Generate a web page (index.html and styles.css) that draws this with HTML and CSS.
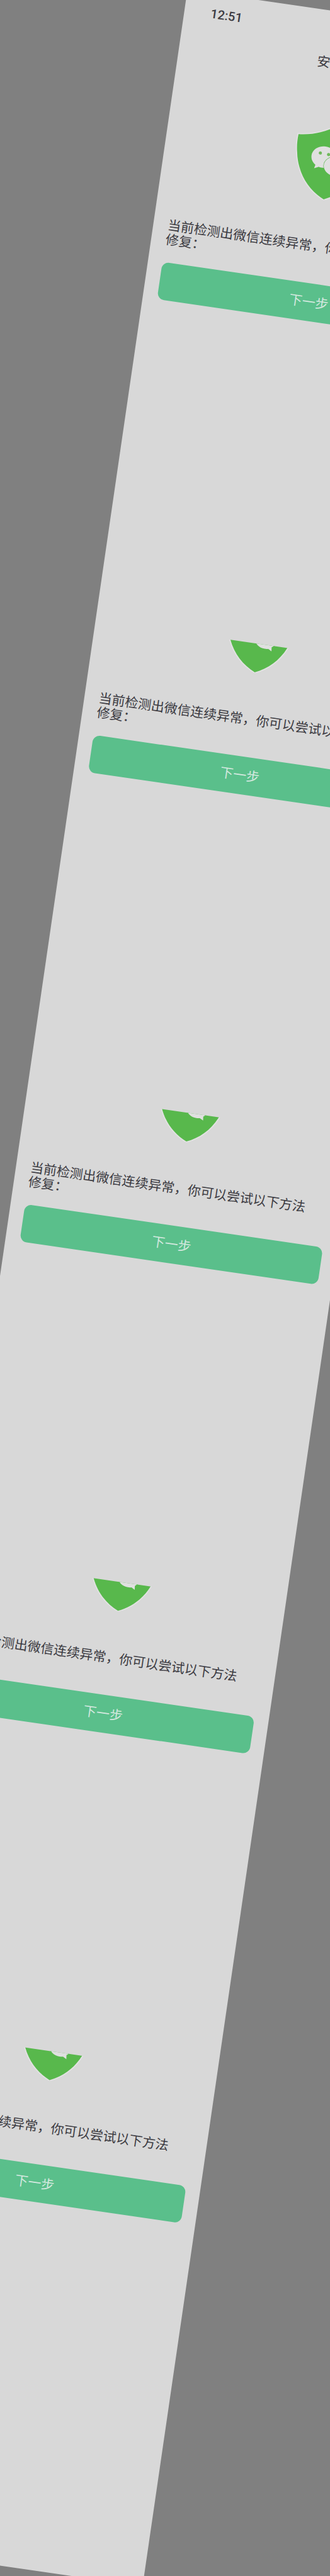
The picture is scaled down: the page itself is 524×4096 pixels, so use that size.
FILE: index.html
```html
<!DOCTYPE html>
<html lang="zh-CN">
<head>
<meta charset="utf-8">
<meta name="viewport" content="width=device-width, initial-scale=1">
<title>安全中心</title>
<link rel="stylesheet" href="styles.css">
</head>
<body>
<svg class="defs" aria-hidden="true">
  <symbol id="shield" viewBox="0 0 180 188">
    <path class="shield-body" d="M90 3C66 20 34 31 4 33C3 48 4 64 7 77C9 90 13 103 18 114C33 148 58 172 90 186C122 172 147 148 162 114C167 103 171 90 173 77C176 64 177 48 176 33C146 31 114 20 90 3Z"/>
    <path class="bubble" d="M76 54C58 54 44 66 44 81C44 90 49 98 57 103L55 112L66 107C69 108 73 108 76 108C94 108 108 96 108 81C108 66 94 54 76 54Z"/>
    <path class="bubble bubble-front" d="M106 76C91 76 78 87 78 100C78 113 91 124 106 124C109 124 112 124 115 123L124 128L123 118C129 114 134 108 134 100C134 87 121 76 106 76Z"/>
    <g class="eyes">
      <circle cx="65" cy="72" r="4"/><circle cx="86" cy="73" r="4"/>
      <circle cx="97" cy="93" r="3"/><circle cx="115" cy="93" r="3"/>
    </g>
  </symbol>
</svg>
<div class="stage">
  <main class="page">
    <header class="top">
      <time class="clock">12:51</time>
      <h1 class="title">安全中心</h1>
    </header>
    <section class="panel">
      <svg class="icon" viewBox="0 0 180 188" aria-hidden="true"><use href="#shield" width="180" height="188"/></svg>
      <p class="message">当前检测出微信连续异常，你可以尝试以下方法修复：</p>
      <button class="next" type="button">下一步</button>
    </section>
    <section class="panel">
      <svg class="icon icon-cut" viewBox="0 114 180 74" aria-hidden="true"><use href="#shield" width="180" height="188"/></svg>
      <p class="message">当前检测出微信连续异常，你可以尝试以下方法修复：</p>
      <button class="next" type="button">下一步</button>
    </section>
    <section class="panel">
      <svg class="icon icon-cut" viewBox="0 114 180 74" aria-hidden="true"><use href="#shield" width="180" height="188"/></svg>
      <p class="message">当前检测出微信连续异常，你可以尝试以下方法修复：</p>
      <button class="next" type="button">下一步</button>
    </section>
    <section class="panel">
      <svg class="icon icon-cut" viewBox="0 114 180 74" aria-hidden="true"><use href="#shield" width="180" height="188"/></svg>
      <p class="message">当前检测出微信连续异常，你可以尝试以下方法修复：</p>
      <button class="next" type="button">下一步</button>
    </section>
    <section class="panel">
      <svg class="icon icon-cut" viewBox="0 114 180 74" aria-hidden="true"><use href="#shield" width="180" height="188"/></svg>
      <p class="message">当前检测出微信连续异常，你可以尝试以下方法修复：</p>
      <button class="next" type="button">下一步</button>
    </section>
  </main>
</div>
</body>
</html>
```
FILE: styles.css
```css
* {
  box-sizing: border-box;
}

body {
  margin: 0;
  background: #808080;
  color: #3c3b42;
  font-family: Roboto, "Noto Sans CJK SC", sans-serif;
}

.defs {
  display: block;
  width: 0;
  height: 0;
}

.stage {
  overflow: hidden;
  min-height: 100vh;
}

.page {
  display: flex;
  flex-direction: column;
  min-height: 100vh;
  background: #d8d8d8;
  transform: rotate(8.28deg);
}

.top {
  display: flex;
  flex-direction: column;
  gap: 26px;
  padding: 20px 42px 84px;
}

.clock {
  font-size: 20px;
  font-weight: 500;
  line-height: 24px;
}

.title {
  margin: 0;
  font-size: 21px;
  font-weight: 400;
  line-height: 27px;
  text-align: center;
}

.panel {
  display: flex;
  flex-direction: column;
  padding: 0 23px 513px;
}

.panel:first-of-type {
  padding-bottom: 519px;
}

.icon {
  align-self: center;
  width: 114px;
  height: 119px;
}

.icon-cut {
  height: 47px;
}

.shield-body {
  fill: #58b84c;
  stroke: #e2e2e2;
  stroke-width: 6px;
  paint-order: stroke;
}

.bubble {
  fill: #e0e0e0;
}

.bubble-front {
  stroke: #58b84c;
  stroke-width: 2px;
  paint-order: stroke;
}

.eyes {
  fill: #6fb95a;
}

.message {
  margin: 64px 0 24px;
  padding-right: 24px;
  font-size: 21px;
  line-height: 23px;
}

.next {
  height: 60px;
  border: 0;
  border-radius: 11px;
  background: #5abf8b;
  color: #d3e8df;
  font: inherit;
  font-size: 21px;
  line-height: 24px;
}
```
